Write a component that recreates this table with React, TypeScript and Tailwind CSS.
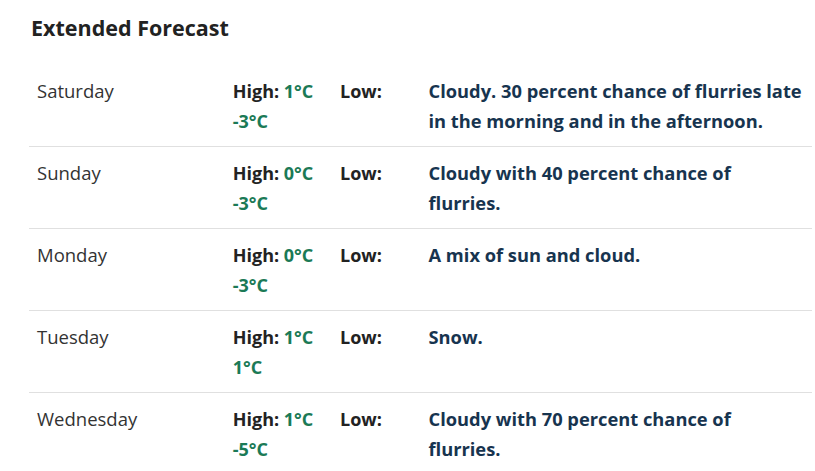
const days = [
  { day: "Saturday", high: "1°C", low: "-3°C", text: "Cloudy. 30 percent chance of flurries late in the morning and in the afternoon." },
  { day: "Sunday", high: "0°C", low: "-3°C", text: "Cloudy with 40 percent chance of flurries." },
  { day: "Monday", high: "0°C", low: "-3°C", text: "A mix of sun and cloud." },
  { day: "Tuesday", high: "1°C", low: "1°C", text: "Snow." },
  { day: "Wednesday", high: "1°C", low: "-5°C", text: "Cloudy with 70 percent chance of flurries." },
];

export default function App() {
  return (
    <div className="min-h-screen bg-white pl-[29px] pr-[3px] pt-[14px] font-['Open_Sans',sans-serif]">
      <h2 className="pl-[2px] text-[21.5px] font-bold leading-[28px] text-[#222]">Extended Forecast</h2>
      <table className="mt-[23px] w-full table-fixed border-collapse">
        <tbody>
          {days.map((d) => (
            <tr key={d.day} className="border-b border-[#e0e0e0]">
              <td className="w-1/4 px-2 pt-[11px] pb-[10px] align-top text-[18.5px] leading-[30px] text-[#333]">
                {d.day}
              </td>
              <td className="w-1/4 px-2 pt-[11px] pb-[10px] align-top text-[18px] font-bold leading-[30px] text-[#222]">
                <span className="mr-[22px]">
                  High: <span className="text-[#1b7a56]">{d.high}</span>
                </span>{" "}
                Low: <span className="text-[#1b7a56]">{d.low}</span>
              </td>
              <td className="w-1/2 px-2 pt-[11px] pb-[10px] align-top text-[18.3px] font-bold leading-[30px] text-[#17344f]">
                {d.text}
              </td>
            </tr>
          ))}
        </tbody>
      </table>
    </div>
  );
}
